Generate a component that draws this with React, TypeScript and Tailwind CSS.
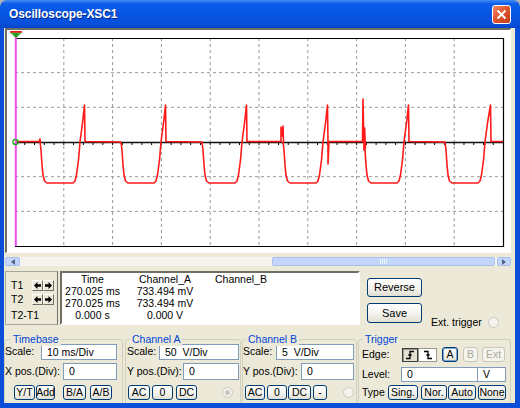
import clsx from "clsx";
import type { ReactNode } from "react";

// Oscilloscope window (XP look)

type Pt = [number, number];

const BASE = 141.5;

const buildTrace = (): string => {
  const pts: Pt[] = [[15, BASE]];
  for (let k = 0; k < 6; k++) {
    const s = 40 + 81 * k;
    if (k === 0) pts.push([s - 1, BASE], [s, 139], [s + 0.5, 142]);
    if (k === 3) pts.push([281, BASE], [281, 127], [282, 136], [283, 126], [283.5, 142]);
    if (k === 4) pts.push([362.5, BASE], [363, 99], [364, 150], [364.6, 128], [365.4, 148]);
    const spike = k === 5 ? 46 : 45;
    pts.push(
      [s + (k === 4 ? 1.5 : 0), 142],
      [s + 1, 150],
      [s + 2, 165],
      [s + 3, 175],
      [s + 4.5, 181],
      [s + 7, 183],
      [s + 33, 183],
      [s + 35, 181],
      [s + 36.5, 175],
      [s + 38.5, 160],
      [s + 40, 142],
      [s + 42.5, 123],
      [s + spike - 0.5, 105],
      [s + spike, BASE]
    );
    if (k === 3) pts.push([s + spike, 164], [s + spike + 1, BASE]);
  }
  pts.push([503, BASE]);
  return pts.map(([x, y], i) => `${i ? "L" : "M"}${x} ${y}`).join(" ");
};

const vLines = [1, 2, 3, 4, 5, 6, 7, 8, 9].map((i) => 15 + 48.8 * i);
const hLines = [1, 2, 4, 5].map((i) => 38 + 34.67 * i);

function Screen() {
  return (
    <svg width={503} height={222} viewBox="7 30 503 222" className="block">
      <rect x={7} y={30} width={503} height={222} fill="#fff" />
      {vLines.map((x) => (
        <line key={x} x1={x} y1={38} x2={x} y2={246} stroke="#9a9a9a" strokeDasharray="3 3" />
      ))}
      {hLines.map((y) => (
        <line key={y} x1={15} y1={y} x2={503} y2={y} stroke="#9a9a9a" strokeDasharray="3 3" />
      ))}
      {/* plot border */}
      <path d="M15 38.5 H503.5 V246.5 H15" fill="none" stroke="#000" strokeWidth={1.2} />
      {/* center axis with ticks */}
      <line x1={15} y1={142.5} x2={503} y2={142.5} stroke="#111" strokeWidth={1.4} />
      {Array.from({ length: 50 }).map((_, i) => (
        <line key={i} x1={15 + 9.76 * i} y1={143} x2={15 + 9.76 * i} y2={145} stroke="#000" />
      ))}
      {/* trace */}
      <path d={buildTrace()} fill="none" stroke="#ff1a1a" strokeWidth={1.6} strokeLinejoin="round" />
      {/* cursor */}
      <line x1={15.8} y1={36} x2={15.8} y2={246} stroke="#f24cf2" strokeWidth={2} />
      <circle cx={15.5} cy={142} r={2.6} fill="none" stroke="#10b010" strokeWidth={1.2} />
      {/* trigger marker */}
      <polygon points="10,32.5 22,32.5 16,38" fill="#2cb52c" />
      <rect x={10} y={31} width={12} height={1.8} fill="#e02020" />
      <line x1={16} y1={33} x2={16} y2={37} stroke="#1d5a1d" strokeWidth={0.8} />
    </svg>
  );
}

function XpBtn({
  className,
  children,
  disabled,
  focus,
}: {
  className?: string;
  children: ReactNode;
  disabled?: boolean;
  focus?: boolean;
}) {
  return (
    <div
      className={clsx(
        "flex h-full shrink-0 items-center justify-center rounded-[3px] border leading-none",
        disabled
          ? "border-[#c9c7ba] bg-[#f4f3ee] text-[#aca899]"
          : "border-[#003c74] bg-[linear-gradient(to_bottom,#ffffff,#f4f3ee_55%,#e2dfd1)] text-black",
        focus && "shadow-[inset_0_0_0_1px_#7da2ce]",
        className
      )}
    >
      {children}
    </div>
  );
}

function Field({ className, children }: { className: string; children?: ReactNode }) {
  return (
    <div
      className={clsx(
        "flex shrink-0 items-center whitespace-pre border border-[#7f9db9] bg-white pl-[5px] leading-none",
        className
      )}
    >
      {children}
    </div>
  );
}

function Radio({ dot }: { dot?: boolean }) {
  return (
    <div className="flex h-[11px] w-[11px] shrink-0 items-center justify-center rounded-full border border-[#cac8bb] bg-[#f4f3ee]">
      {dot && <div className="h-[5px] w-[5px] rounded-full bg-[#c9c7ba]" />}
    </div>
  );
}

function Group({
  label,
  className,
  labelClass,
  children,
}: {
  label: string;
  className: string;
  labelClass: string;
  children: ReactNode;
}) {
  return (
    <div className={clsx("relative h-[70px] shrink-0 rounded-[3px] border border-[#d0d0bf]", className)}>
      <span
        className={clsx(
          "absolute top-[-8px] bg-[#ece9d8] px-[2px] leading-[14px] text-[#0046d5]",
          labelClass
        )}
      >
        {label}
      </span>
      {children}
    </div>
  );
}

function Arrow({ left }: { left?: boolean }) {
  return (
    <div className="flex h-[11px] w-[11px] items-center justify-center border border-t-white border-l-white border-r-[#716f64] border-b-[#716f64] bg-[#ece9d8]">
      <svg width={7} height={7} viewBox="0 0 7 7">
        <path
          d={left ? "M0 3.5 L3.5 0 V2.2 H7 V4.8 H3.5 V7 Z" : "M7 3.5 L3.5 0 V2.2 H0 V4.8 H3.5 V7 Z"}
          fill="#000"
        />
      </svg>
    </div>
  );
}

function Edge({ fall }: { fall?: boolean }) {
  return (
    <svg width={10} height={10} viewBox="0 0 10 10">
      <path
        d={fall ? "M1 1.5 H5 V8.5 H9 M3.3 5 H6.7" : "M1 8.5 H5 V1.5 H9 M3.3 5 H6.7"}
        fill="none"
        stroke="#000"
        strokeWidth={1.3}
      />
    </svg>
  );
}

export default function App() {
  return (
    <div className="h-[408px] w-[520px] bg-[#b4b4b4] font-['Liberation_Sans',Arial,sans-serif] text-[10.5px] text-black">
      <div className="flex h-full w-full flex-col overflow-hidden rounded-t-[7px]">
        {/* title bar */}
        <div className="flex h-[28px] shrink-0 items-center bg-[linear-gradient(to_bottom,#3f8cf3_0%,#0b5ce9_14%,#0654e2_55%,#0750dc_85%,#0443c9_100%)] pl-[9px]">
          <span className="text-[12px] font-bold tracking-[-0.1px] text-white [text-shadow:1px_1px_#0b2a8c]">
            Oscilloscope-XSC1
          </span>
          <div className="ml-auto mr-[9px] flex h-[19px] w-[19px] items-center justify-center rounded-[3px] border border-white bg-[linear-gradient(135deg,#f08a68,#df5630_45%,#c23c18)]">
            <svg width={11} height={11} viewBox="0 0 11 11">
              <path d="M1.5 1.5 L9.5 9.5 M9.5 1.5 L1.5 9.5" stroke="#fff" strokeWidth={2} />
            </svg>
          </div>
        </div>

        {/* body */}
        <div className="flex flex-1 flex-col overflow-hidden border-b-[5px] border-l-4 border-r-[5px] border-[#0b4fd9] bg-[#ece9d8]">
          {/* screen */}
          <div className="ml-[1px] w-[506px] shrink-0 border-b border-l-2 border-r border-t-2 border-b-[#fff] border-l-[#716f64] border-r-[#fff] border-t-[#716f64]">
            <Screen />
          </div>

          {/* scrollbar */}
          <div className="ml-[1px] mt-[4px] flex h-[9px] w-[506px] shrink-0 bg-[#f4f3ee]">
            <div className="flex w-[15px] items-center justify-center rounded-[2px] border border-[#a9c0f2] bg-[#c5d6fc]">
              <svg width={4} height={6} viewBox="0 0 4 6">
                <path d="M4 0 L0 3 L4 6 Z" fill="#4d6185" />
              </svg>
            </div>
            <div className="ml-[252px] flex w-[223px] items-center justify-center gap-[1px] rounded-[2px] border border-[#a9c0f2] bg-[#c5d6fc]">
              <div className="h-[5px] w-[1px] bg-[#eef4fe]" />
              <div className="h-[5px] w-[1px] bg-[#eef4fe]" />
              <div className="h-[5px] w-[1px] bg-[#eef4fe]" />
              <div className="h-[5px] w-[1px] bg-[#eef4fe]" />
            </div>
            <div className="ml-[2px] flex w-[14px] items-center justify-center rounded-[2px] border border-[#a9c0f2] bg-[#c5d6fc]">
              <svg width={4} height={6} viewBox="0 0 4 6">
                <path d="M0 0 L4 3 L0 6 Z" fill="#4d6185" />
              </svg>
            </div>
          </div>

          {/* cursor readout row */}
          <div className="mt-[5px] flex h-[54px] shrink-0">
            <div className="ml-[1px] flex w-[53px] flex-col border border-[#aca899] border-r-[#716f64] pl-[5px] pt-[8px]">
              <div className="flex h-[11px] items-center">
                <span className="w-[21px]">T1</span>
                <Arrow left />
                <Arrow />
              </div>
              <div className="mt-[3px] flex h-[11px] items-center">
                <span className="w-[21px]">T2</span>
                <Arrow left />
                <Arrow />
              </div>
              <div className="mt-[4px] leading-[12px]">T2-T1</div>
            </div>
            <div className="ml-[2px] flex w-[300px] border-2 border-b-white border-l-[#716f64] border-r-white border-t-[#716f64] bg-white leading-[12px]">
              <div className="flex w-[61px] flex-col items-center">
                <span>Time</span>
                <span>270.025 ms</span>
                <span>270.025 ms</span>
                <span>0.000 s</span>
              </div>
              <div className="flex w-[84px] flex-col items-center">
                <span>Channel_A</span>
                <span>733.494 mV</span>
                <span>733.494 mV</span>
                <span>0.000 V</span>
              </div>
              <div className="pl-[8px]">Channel_B</div>
            </div>
            <div className="ml-[7px] flex w-[55px] flex-col">
              <div className="mt-[7px] h-[19px]">
                <XpBtn className="w-[55px] text-[11px]">Reverse</XpBtn>
              </div>
              <div className="mt-[6px] h-[20px]">
                <XpBtn className="w-[55px] text-[11px]">Save</XpBtn>
              </div>
            </div>
            <div className="ml-[9px] mt-[45px] flex h-[12px] items-center">
              <span className="leading-[12px]">Ext. trigger</span>
              <div className="ml-[6px]">
                <Radio />
              </div>
            </div>
          </div>

          {/* control groups */}
          <div className="mt-[14px] flex shrink-0 items-start">
            <Group label="Timebase" className="w-[119px]" labelClass="left-[6px]">
              <div className="mt-[4px] flex h-[16px] items-center">
                <span className="w-[36px]">Scale:</span>
                <Field className="h-[16px] w-[76px]">10 ms/Div</Field>
              </div>
              <div className="mt-[3px] flex h-[17px] items-center">
                <span className="w-[58px]">X pos.(Div):</span>
                <Field className="h-[17px] w-[54px]">0</Field>
              </div>
              <div className="mt-[5px] flex h-[15px]">
                <XpBtn className="ml-[9px] w-[21px]">Y/T</XpBtn>
                <XpBtn className="ml-[1px] w-[19px]">Add</XpBtn>
                <XpBtn className="ml-[8px] w-[23px]">B/A</XpBtn>
                <XpBtn className="ml-[4px] w-[22px]">A/B</XpBtn>
              </div>
            </Group>

            <Group label="Channel A" className="ml-[2px] w-[116px]" labelClass="left-[4px]">
              <div className="mt-[4px] flex h-[16px] items-center pl-[1px]">
                <span className="w-[32px]">Scale:</span>
                <Field className="h-[16px] w-[80px]">50  V/Div</Field>
              </div>
              <div className="mt-[3px] flex h-[17px] items-center pl-[1px]">
                <span className="w-[56px]">Y pos.(Div):</span>
                <Field className="h-[17px] w-[56px]">0</Field>
              </div>
              <div className="mt-[5px] flex h-[15px] items-center">
                <XpBtn className="ml-[2px] w-[22px]">AC</XpBtn>
                <XpBtn className="ml-[2px] w-[21px]">0</XpBtn>
                <XpBtn className="ml-[3px] w-[21px]">DC</XpBtn>
                <div className="ml-[25px]">
                  <Radio dot />
                </div>
              </div>
            </Group>

            <Group label="Channel B" className="ml-[1px] w-[115px]" labelClass="left-[3px]">
              <div className="mt-[4px] flex h-[16px] items-center">
                <span className="w-[33px]">Scale:</span>
                <Field className="h-[16px] w-[78px]">5  V/Div</Field>
              </div>
              <div className="mt-[3px] flex h-[17px] items-center">
                <span className="w-[58px]">Y pos.(Div):</span>
                <Field className="h-[17px] w-[53px]">0</Field>
              </div>
              <div className="mt-[5px] flex h-[15px] items-center">
                <XpBtn className="ml-[2px] w-[20px]">AC</XpBtn>
                <XpBtn className="ml-[2px] w-[20px]">0</XpBtn>
                <XpBtn className="ml-[1px] w-[23px]">DC</XpBtn>
                <XpBtn className="ml-[2px] w-[14px]">-</XpBtn>
                <div className="ml-[16px]">
                  <Radio />
                </div>
              </div>
            </Group>

            <Group label="Trigger" className="ml-[1px] w-[153px]" labelClass="left-[4px]">
              <div className="mt-[7px] flex h-[15px] items-center pl-[3px]">
                <span className="w-[40px]">Edge:</span>
                <div className="flex h-[14px] w-[16px] items-center justify-center border border-[#3c3c3c] bg-[#e4e1d3] shadow-[inset_1px_1px_0_#9c9a8c]">
                  <Edge />
                </div>
                <div className="flex h-[14px] w-[19px] items-center justify-center border border-[#9c9a8c] bg-white">
                  <Edge fall />
                </div>
                <XpBtn className="ml-[5px] w-[16px]" focus>
                  A
                </XpBtn>
                <XpBtn className="ml-[5px] w-[15px]" disabled>
                  B
                </XpBtn>
                <XpBtn className="ml-[4px] w-[23px]" disabled>
                  Ext
                </XpBtn>
              </div>
              <div className="mt-[5px] flex h-[15px] items-center pl-[3px]">
                <span className="w-[39px]">Level:</span>
                <Field className="h-[15px] w-[77px]">0</Field>
                <Field className="h-[15px] w-[28px] border-l-0">V</Field>
              </div>
              <div className="mt-[3px] flex h-[15px] items-center pl-[3px]">
                <span className="w-[26px]">Type</span>
                <XpBtn className="w-[30px]">Sing.</XpBtn>
                <XpBtn className="ml-[3px] w-[26px]">Nor.</XpBtn>
                <XpBtn className="ml-[1px] w-[28px]">Auto</XpBtn>
                <XpBtn className="ml-[2px] w-[28px]">None</XpBtn>
              </div>
            </Group>
          </div>
        </div>
      </div>
    </div>
  );
}
